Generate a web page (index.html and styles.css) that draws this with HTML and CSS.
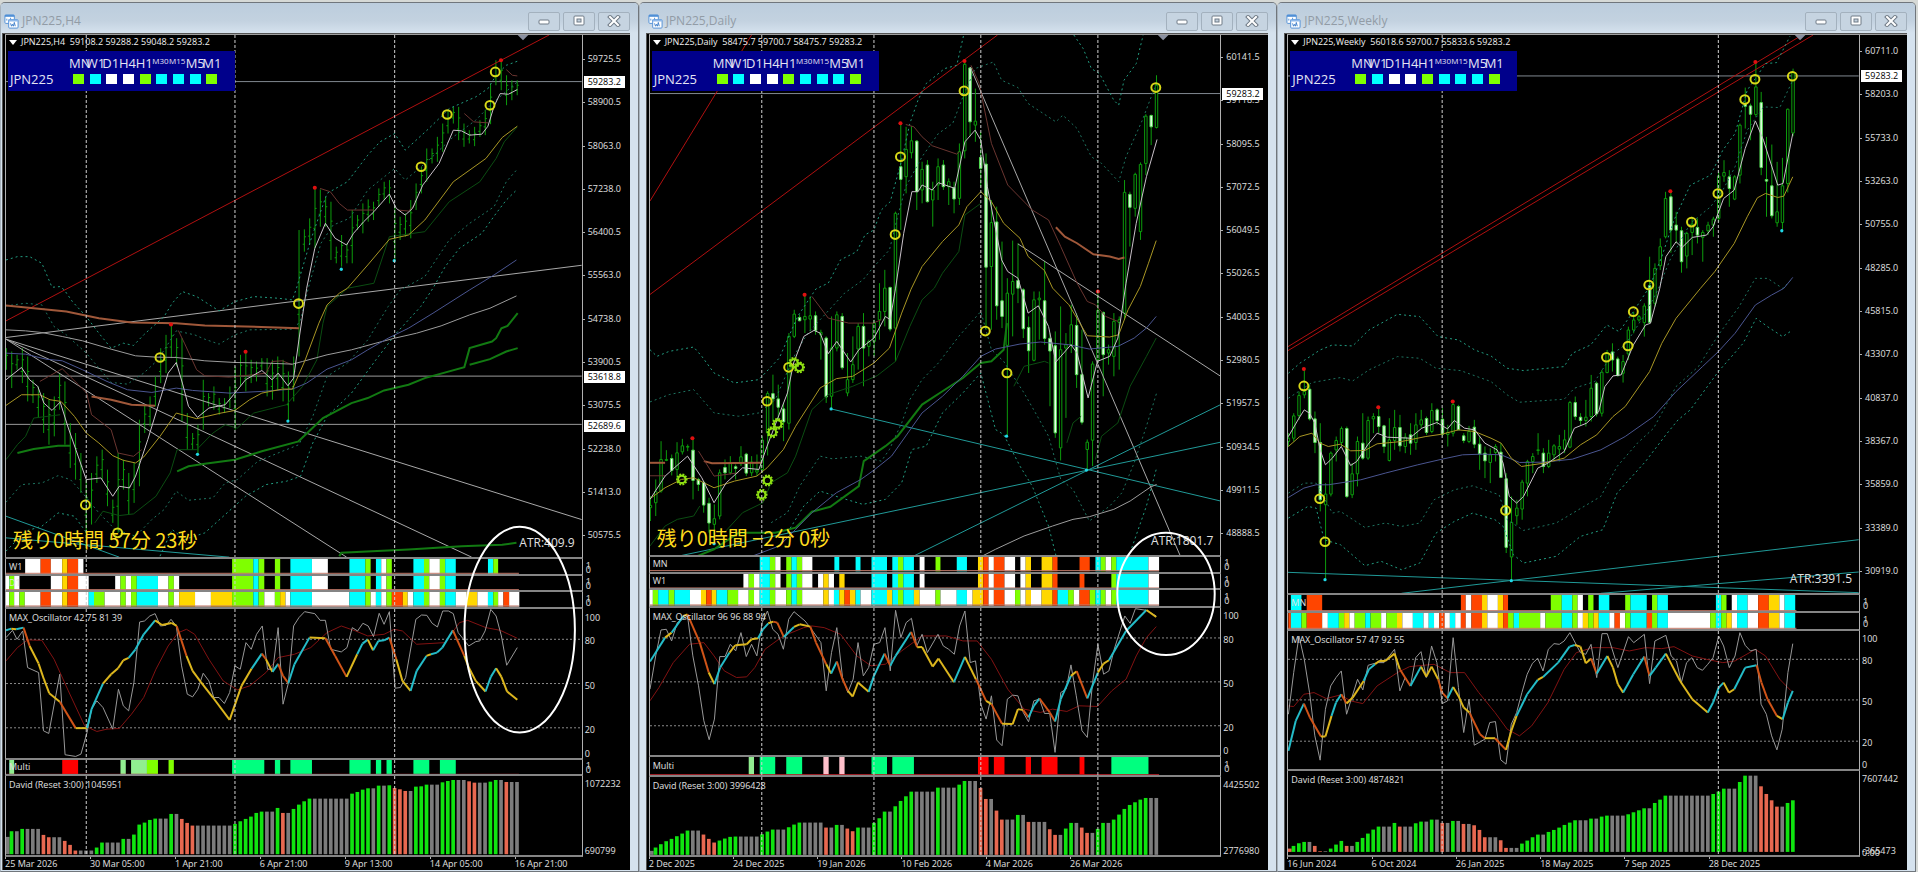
FILE: index.html
```html
<!DOCTYPE html>
<html lang="ja">
<head>
    <meta charset="UTF-8">
    <meta name="viewport" content="width=device-width, initial-scale=1.0">
    <title>JPN225</title>
    <link rel="stylesheet" href="styles.css">
</head>
<body>
    <!-- shared title bar icon -->
    <svg class="defs" aria-hidden="true">
        <symbol id="chart-icon" viewBox="0 0 16 16">
            <rect x="1" y="1" width="10" height="9" rx="1" fill="#fff" stroke="#4f8fd6"/>
            <rect x="1" y="1" width="10" height="2" fill="#4f8fd6"/>
            <path d="M3 7v-2M5 6v2M7 4v3" stroke="#4f8fd6" fill="none"/>
            <rect x="5" y="6" width="10" height="9" rx="1" fill="#fff" stroke="#4f8fd6"/>
            <rect x="5" y="6" width="10" height="2" fill="#8db8ea"/>
            <path d="M7 10l1 3 1-2 1 2 1-4 1 4" stroke="#3b7cc9" fill="none"/>
        </symbol>
        <symbol id="icon-min" viewBox="0 0 14 12">
            <rect x="2" y="5" width="10" height="4" rx="1" fill="#fff" stroke="#6f7a86"/>
        </symbol>
        <symbol id="icon-max" viewBox="0 0 14 12">
            <rect x="2" y="1" width="10" height="9" rx="1" fill="#fff" stroke="#6f7a86"/>
            <rect x="5" y="4" width="4" height="3" fill="#c3d1de" stroke="#6f7a86"/>
        </symbol>
        <symbol id="icon-close" viewBox="0 0 14 12">
            <path d="M3 2l8 8M11 2l-8 8" stroke="#6f7a86" stroke-width="4" stroke-linecap="square"/>
            <path d="M3 2l8 8M11 2l-8 8" stroke="#fff" stroke-width="2" stroke-linecap="square"/>
        </symbol>
    </svg>

    <main class="desktop">
        <section class="window window-first" data-chart="h4">
            <header class="title-bar">
                <svg class="title-icon"><use href="#chart-icon"/></svg>
                <h2>JPN225,H4</h2>
                <button aria-label="Minimize"><svg><use href="#icon-min"/></svg></button>
                <button aria-label="Maximize"><svg><use href="#icon-max"/></svg></button>
                <button aria-label="Close"><svg><use href="#icon-close"/></svg></button>
            </header>
            <div class="client">
                <div class="stack">
                    <div class="pane" data-pane="main">
                        <div class="plot">
                            <p class="quote">JPN225,H4&nbsp; 59108.2 59288.2 59048.2 59283.2</p>
                            <div class="panel">
                                <div class="frames"><span>MN</span><span>W1</span><span>D1</span><span>H4</span><span>H1</span><span class="tiny">M30</span><span class="tiny">M15</span><span>M5</span><span>M1</span></div>
                                <b>JPN225</b>
                                <div class="lamps"><i class="g"></i><i class="c"></i><i class="w"></i><i class="w"></i><i class="g"></i><i class="c"></i><i class="c"></i><i class="c"></i><i class="g"></i></div>
                            </div>
                            <p class="timer">残り0時間 57分 23秒</p>
                            <p class="atr">ATR:409.9</p>
                        </div>
                        <div class="axis prices prices-h4">
                            <span>59725.5</span><span>58900.5</span><span>58063.0</span><span>57238.0</span><span>56400.5</span><span>55563.0</span><span>54738.0</span><span>53900.5</span><span>53075.5</span><span>52238.0</span><span>51413.0</span><span>50575.5</span>
                            <em data-y="244">59283.2</em><em data-y="1132">53618.8</em><em data-y="1279">52689.6</em>
                        </div>
                    </div>
                    <div class="pane" data-pane="s1"><div class="plot"><p class="label">W1</p></div><div class="axis bits"><span>1</span><span>0</span></div></div>
                    <div class="pane" data-pane="s2"><div class="plot"><p class="label">D1</p></div><div class="axis bits"><span>1</span><span>0</span></div></div>
                    <div class="pane" data-pane="s3"><div class="plot"></div><div class="axis bits"><span>1</span><span>0</span></div></div>
                    <div class="pane" data-pane="osc">
                        <div class="plot"><p class="label">MAX_Oscillator 42 75 81 39</p></div>
                        <div class="axis levels"><span>100</span><span>80</span><span>50</span><span>20</span><span>0</span></div>
                    </div>
                    <div class="pane" data-pane="multi"><div class="plot"><p class="label">Multi</p></div><div class="axis bits"><span>1</span><span>0</span></div></div>
                    <div class="pane" data-pane="david">
                        <div class="plot"><p class="label">David (Reset 3:00) 1045951</p></div>
                        <div class="axis range"><span>1072232</span><span>690799</span></div>
                    </div>
                </div>
                <footer class="times"><span>25 Mar 2026</span><span>30 Mar 05:00</span><span>1 Apr 21:00</span><span>6 Apr 21:00</span><span>9 Apr 13:00</span><span>14 Apr 05:00</span><span>16 Apr 21:00</span></footer>
            </div>
        </section>

        <section class="window" data-chart="daily">
            <header class="title-bar">
                <svg class="title-icon"><use href="#chart-icon"/></svg>
                <h2>JPN225,Daily</h2>
                <button aria-label="Minimize"><svg><use href="#icon-min"/></svg></button>
                <button aria-label="Maximize"><svg><use href="#icon-max"/></svg></button>
                <button aria-label="Close"><svg><use href="#icon-close"/></svg></button>
            </header>
            <div class="client">
                <div class="stack">
                    <div class="pane" data-pane="main">
                        <div class="plot">
                            <p class="quote">JPN225,Daily&nbsp; 58475.7 59700.7 58475.7 59283.2</p>
                            <div class="panel">
                                <div class="frames"><span>MN</span><span>W1</span><span>D1</span><span>H4</span><span>H1</span><span class="tiny">M30</span><span class="tiny">M15</span><span>M5</span><span>M1</span></div>
                                <b>JPN225</b>
                                <div class="lamps"><i class="g"></i><i class="c"></i><i class="w"></i><i class="w"></i><i class="g"></i><i class="c"></i><i class="c"></i><i class="c"></i><i class="g"></i></div>
                            </div>
                            <p class="timer">残り0時間 −2分 0秒</p>
                            <p class="atr">ATR:1801.7</p>
                        </div>
                        <div class="axis prices prices-daily">
                            <span>60141.5</span><span>59118.5</span><span>58095.5</span><span>57072.5</span><span>56049.5</span><span>55026.5</span><span>54003.5</span><span>52980.5</span><span>51957.5</span><span>50934.5</span><span>49911.5</span><span>48888.5</span>
                            <em data-y="281">59283.2</em>
                        </div>
                    </div>
                    <div class="pane" data-pane="s1"><div class="plot"><p class="label">MN</p></div><div class="axis bits"><span>1</span><span>0</span></div></div>
                    <div class="pane" data-pane="s2"><div class="plot"><p class="label">W1</p></div><div class="axis bits"><span>1</span><span>0</span></div></div>
                    <div class="pane" data-pane="s3"><div class="plot"></div><div class="axis bits"><span>1</span><span>0</span></div></div>
                    <div class="pane" data-pane="osc">
                        <div class="plot"><p class="label">MAX_Oscillator 96 96 88 94</p></div>
                        <div class="axis levels"><span>100</span><span>80</span><span>50</span><span>20</span><span>0</span></div>
                    </div>
                    <div class="pane" data-pane="multi"><div class="plot"><p class="label">Multi</p></div><div class="axis bits"><span>1</span><span>0</span></div></div>
                    <div class="pane" data-pane="david">
                        <div class="plot"><p class="label">David (Reset 3:00) 3996428</p></div>
                        <div class="axis range"><span>4425502</span><span>2776980</span></div>
                    </div>
                </div>
                <footer class="times"><span>2 Dec 2025</span><span>24 Dec 2025</span><span>19 Jan 2026</span><span>10 Feb 2026</span><span>4 Mar 2026</span><span>26 Mar 2026</span></footer>
            </div>
        </section>

        <section class="window" data-chart="weekly">
            <header class="title-bar">
                <svg class="title-icon"><use href="#chart-icon"/></svg>
                <h2>JPN225,Weekly</h2>
                <button aria-label="Minimize"><svg><use href="#icon-min"/></svg></button>
                <button aria-label="Maximize"><svg><use href="#icon-max"/></svg></button>
                <button aria-label="Close"><svg><use href="#icon-close"/></svg></button>
            </header>
            <div class="client">
                <div class="stack">
                    <div class="pane" data-pane="main">
                        <div class="plot">
                            <p class="quote">JPN225,Weekly&nbsp; 56018.6 59700.7 55833.6 59283.2</p>
                            <div class="panel">
                                <div class="frames"><span>MN</span><span>W1</span><span>D1</span><span>H4</span><span>H1</span><span class="tiny">M30</span><span class="tiny">M15</span><span>M5</span><span>M1</span></div>
                                <b>JPN225</b>
                                <div class="lamps"><i class="g"></i><i class="c"></i><i class="w"></i><i class="w"></i><i class="g"></i><i class="c"></i><i class="c"></i><i class="c"></i><i class="g"></i></div>
                            </div>
                            <p class="atr">ATR:3391.5</p>
                        </div>
                        <div class="axis prices prices-weekly">
                            <span>60711.0</span><span>58203.0</span><span>55733.0</span><span>53263.0</span><span>50755.0</span><span>48285.0</span><span>45815.0</span><span>43307.0</span><span>40837.0</span><span>38367.0</span><span>35859.0</span><span>33389.0</span><span>30919.0</span>
                            <em data-y="228">59283.2</em>
                        </div>
                    </div>
                    <div class="pane" data-pane="s1"><div class="plot"><p class="label">MN</p></div><div class="axis bits"><span>1</span><span>0</span></div></div>
                    <div class="pane" data-pane="s2"><div class="plot"></div><div class="axis bits"><span>1</span><span>0</span></div></div>
                    <div class="pane" data-pane="osc">
                        <div class="plot"><p class="label">MAX_Oscillator 57 47 92 55</p></div>
                        <div class="axis levels"><span>100</span><span>80</span><span>50</span><span>20</span><span>0</span></div>
                    </div>
                    <div class="pane" data-pane="david">
                        <div class="plot"><p class="label">David (Reset 3:00) 4874821</p></div>
                        <div class="axis range"><span>7607442</span><span>-365473<small>0.00</small></span></div>
                    </div>
                </div>
                <footer class="times"><span>16 Jun 2024</span><span>6 Oct 2024</span><span>26 Jan 2025</span><span>18 May 2025</span><span>7 Sep 2025</span><span>28 Dec 2025</span></footer>
            </div>
        </section>
    </main>

    <script src="charts.js"></script>
</body>
</html>
```
FILE: styles.css
```css
* {
    box-sizing: border-box;
}
body {
    margin: 0;
    background: #d6d9d6;
    font-family: "Open Sans", "Noto Sans", sans-serif;
    font-size: 9px;
    line-height: 12px;
    color: #e0e0e0;
}
p, h2 {
    margin: 0;
    font-weight: normal;
}
.defs {
    display: none;
}
.desktop {
    display: grid;
    grid-template-columns: repeat(3, minmax(0, 1fr));
    grid-template-rows: 100%;
    height: 100vh;
    padding: 2px 2px 0 0;
}

/* Windows */
.window {
    min-width: 0;
    display: flex;
    flex-direction: column;
    padding: 0 8px 1px 6px;
    background: #d5e2ee;
    border: 1px solid #70767c;
    border-left-color: #a9b4be;
    border-radius: 5px 5px 0 0;
}
.window-first {
    padding-left: 1px;
}
.title-bar {
    display: flex;
    align-items: center;
    gap: 3px;
    height: 30px;
    margin: 0 -8px 0 -6px;
    padding: 6px 8px 0 8px;
    background: linear-gradient(#bccddd, #c3d2e0 60%, #d5e2ee);
    border-radius: 4px 4px 0 0;
}
.window-first .title-bar {
    margin-left: -1px;
    padding-left: 3px;
}
.title-icon {
    width: 15px;
    height: 15px;
}
.title-bar h2 {
    flex: 1;
    font-size: 12px;
    color: #929ca6;
}
.title-bar button {
    width: 32px;
    height: 19px;
    padding: 0;
    display: flex;
    align-items: center;
    justify-content: center;
    background: #c6d4e1;
    border: 1px solid #a3b1be;
    border-radius: 2px;
}
.title-bar button svg {
    width: 14px;
    height: 12px;
}
.client {
    flex: 1;
    min-height: 0;
    display: flex;
    flex-direction: column;
    padding: 0 0 0 2px;
    background: #000;
    border-left: 1px solid #555;
    border-top: 1px solid #555;
}

/* Chart panes */
.stack {
    position: relative;
    flex: 1;
    min-height: 0;
    display: flex;
    flex-direction: column;
    border-top: 1px solid #a0a0a0;
}
.pane {
    flex: 1 1 0;
    min-height: 0;
    display: flex;
}
.plot {
    position: relative;
    flex: 1;
    min-width: 0;
    border: 1px solid #b0b0b0;
    border-width: 0 1px 2px 1px;
    border-bottom-color: #858585;
}
.plot svg {
    position: absolute;
    inset: 0;
    width: 100%;
    height: 100%;
}
.plot p, .panel {
    position: absolute;
    z-index: 1;
    white-space: nowrap;
}
.quote {
    left: 15px;
    top: 1px;
    color: #f0f0f0;
}
.quote::before {
    content: "";
    position: absolute;
    left: -12px;
    top: 4px;
    border: 4px solid transparent;
    border-top: 5px solid #fff;
    border-bottom: 0;
}
.label {
    left: 3px;
    top: 3px;
}
[data-pane^="s"] .label, [data-pane="multi"] .label {
    top: 50%;
    margin-top: -6px;
}
.timer {
    left: 7px;
    bottom: 5px;
    font: 20px/24px "Noto Sans CJK JP", sans-serif;
    color: #ffdc1e;
}
.atr {
    right: 7px;
    bottom: 6px;
    font-size: 12px;
    line-height: 16px;
}
.panel {
    left: 2px;
    top: 16px;
    width: 227px;
    height: 40px;
    padding: 4px 14px 0 2px;
    display: grid;
    grid-template-columns: 61px 1fr;
    grid-template-rows: 16px 16px;
    align-items: center;
    background: #00008b;
    font-size: 13px;
    color: #e4e4f4;
}
.frames {
    grid-column: 2;
}
.frames, .lamps {
    display: grid;
    grid-template-columns: repeat(9, 1fr);
}
.frames span {
    width: 0;
    margin-left: -2px;
}
.frames .tiny {
    font-size: 8px;
    line-height: 8px;
}
.panel b {
    font-weight: normal;
}
.lamps i {
    width: 11px;
    height: 10px;
    margin-left: 2px;
}
.lamps .g { background: #7fff00; }
.lamps .c { background: #00ffff; }
.lamps .w { background: #ffffff; }

/* Scales */
.axis {
    position: relative;
    width: 47px;
    padding-left: 2px;
    display: flex;
    flex-direction: column;
    justify-content: space-between;
}
.prices {
    padding-left: 5px;
}
.prices span::before {
    content: "";
    position: absolute;
    left: 0;
    width: 2px;
    margin-top: 6px;
    border-top: 1px solid #b0b0b0;
}
.prices-h4 { padding-top: 18px; padding-bottom: 18px; }
.prices-daily { padding-top: 16px; padding-bottom: 18px; }
.prices-weekly { padding-top: 10px; padding-bottom: 18px; }
.axis em {
    position: absolute;
    left: 1px;
    width: 41px;
    margin-top: -6px;
    padding-left: 4px;
    background: #fff;
    color: #000;
    font-style: normal;
}
.bits {
    justify-content: center;
    padding-left: 3px;
    line-height: 4px;
}
.levels {
    display: grid;
    grid-template-rows: 40fr 102fr 164fr 104fr 36fr;
    align-items: center;
    padding-top: 2px;
}
.range {
    padding-top: 2px;
}
.range small {
    position: absolute;
    left: 2px;
    bottom: -2px;
    font-size: 9px;
}
.times {
    display: flex;
    height: 13px;
}
.times span {
    flex: none;
    width: 13.6%;
    line-height: 10px;
    white-space: nowrap;
}
.times span::before {
    content: "";
    display: block;
    height: 2px;
    border-left: 1px solid #b0b0b0;
}

/* Drawing */
.shape { fill: none; vector-effect: non-scaling-stroke; stroke-width: 1; }
.vline { stroke: #d0d0d0; stroke-dasharray: 3 2; }
.hline { stroke: #9a9a9a; }
.price { stroke: #808890; }
.level { stroke: #8a8a8a; stroke-dasharray: 2 2; }
.trend-red { stroke: #b01010; }
.trend-white { stroke: #a8a8a8; }
.trend-cyan { stroke: #209a98; }
.ma-white { stroke: #c8c0c8; }
.ma-long { stroke: #9c9c9c; }
.ma-blue { stroke: #4a5590; }
.ma-yellow { stroke: #a89624; }
.band { stroke: #229c80; stroke-dasharray: 2 3; }
.band-in { stroke: #1e7460; stroke-dasharray: 2 3; }
.orange { stroke: #a0583a; stroke-width: 2; }
.brown { stroke: #6a3530; }
.green { stroke: #127a12; stroke-width: 2; }
.dark { stroke: #0b4d12; }
.wick { stroke: #0c9c0c; }
.up { stroke: #0c9c0c; fill: #000; vector-effect: non-scaling-stroke; }
.down { stroke: #50d850; fill: #eaffea; vector-effect: non-scaling-stroke; }
.ring { stroke: #d8d818; stroke-width: 2; }
.sun { stroke: #8fe012; stroke-width: 2; }
.dot-red { fill: #e01010; }
.dot-cyan { fill: #20d8e8; }
.marker { fill: #8a90a0; }
.osc-grey { stroke: #989898; }
.osc-red { stroke: #821212; }
.osc { stroke-width: 2; }
.osc-c { stroke: #24bcc8; }
.osc-y { stroke: #dcb61e; }
.osc-o { stroke: #d05418; }
.base { stroke: #c07868; }
.base-red { stroke: #b02028; }
.fill-w { fill: #ffffff; }
.fill-r { fill: #ff4500; }
.fill-y { fill: #ffd700; }
.fill-g { fill: #7fff00; }
.fill-c { fill: #00ffff; }
.fill-s { fill: #00ff7f; }
.fill-l { fill: #90ee90; }
.fill-R { fill: #ff0000; }
.fill-p { fill: #ffc0cb; }
.bar-g { fill: #10e410; }
.bar-k { fill: #7c7c7c; }
.bar-r { fill: #e86850; }
.stack > .overlay {
    position: absolute;
    z-index: 2;
    left: 0;
    top: 0;
    width: calc(100% - 47px);
    height: 100%;
    pointer-events: none;
}
.circle { stroke: #fff; stroke-width: 2; }
```
FILE: charts.js
```js
// Every chart uses one coordinate space; a pane shows the slice between its top and the next pane's top.
const BAR = 13.06;

const charts = {
    h4: {
        left: 12, width: 1413, first: 13, bottom: 2574,
        panes: { main: 104, s1: 1679, s2: 1730, s3: 1779, osc: 1829, multi: 2281, david: 2332 },
        vlines: [209, 574, 966],
        price: 244,
        hlines: [1129, 1274],
        levels: [1920, 2053, 2186],
        circle: [1271, 1891, 135, 309],
        marker: 1281,
        // high low for each H4 bar
        sticks: "1045 1110 1055 1165 1065 1110 1045 1150 1070 1205 1140 1210 1160 1255 1180 1300 1200 1335 1190 1310 1120 1230 1145 1335 1270 1405 1300 1440 1360 1480 1440 1600 1420 1575 1370 1450 1350 1440 1410 1520 1500 1570 1360 1600 1380 1470 1420 1545 1390 1510 1260 1460 1215 1300 1190 1280 1130 1220 1045 1150 1005 1120 975 1075 1015 1100 1015 1265 1240 1350 1300 1350 1275 1365 1140 1290 1180 1220 1160 1230 1195 1245 1195 1240 1160 1225 1100 1290 1065 1160 1060 1175 1080 1150 1085 1145 1075 1110 1075 1190 1080 1200 1070 1170 1080 1205 1115 1265 1070 1205 690 1070 688 755 655 735 565 745 568 680 590 680 605 780 740 790 705 800 730 790 630 790 645 690 610 700 598 665 605 660 565 620 545 600 540 610 615 780 650 720 640 710 600 715 550 630 500 580 445 545 445 490 410 485 370 455 330 400 320 370 320 420 370 440 390 430 380 438 360 410 330 405 250 372 180 255 180 270 225 315 240 300 240 285",
        lines: [
            ["trend-red", "12,963 1345,104"],
            ["trend-white", "12,1013 1425,796"],
            ["trend-white", "12,1018 1425,1560"],
            ["trend-white", "12,1018 1155,1673"],
            ["trend-white", "12,1018 848,1673"],
            ["trend-cyan", "12,1550 290,1673"],
            ["trend-cyan", "12,1615 560,1673"],
            ["band", "12,780 40,770 70,770 100,790 125,862 145,860 155,870 175,905 209,950 240,1000 270,1045 300,1030 325,1037 350,1005 400,950 420,910 445,875 480,890 535,933 574,905 620,890 680,895 715,900 725,865 760,720 800,580 850,545 900,465 930,425 966,400 992,450 1050,385 1100,325 1165,290 1195,265 1215,225 1240,195 1267,183"],
            ["band-in", "12,918 60,910 100,915 130,980 160,1005 209,1060 270,1148 310,1153 350,1120 385,1080 430,993 475,1005 500,1018 535,1033 574,1005 610,990 720,988 735,960 755,860 785,730 815,675 855,655 900,570 966,505 992,540 1050,480 1110,410 1165,360 1205,310 1267,245"],
            ["band-in", "12,1508 50,1455 100,1450 140,1428 170,1440 200,1480 240,1540 280,1590 330,1610 370,1560 400,1530 430,1475 460,1502 520,1495 550,1450 580,1440 630,1385 690,1355 731,1335 765,1250 800,1130 850,1090 900,1020 950,920 980,870 1040,830 1100,720 1150,670 1210,620 1240,545 1265,510"],
            ["band", "12,1655 60,1595 100,1580 140,1540 180,1550 210,1600"],
            ["band", "390,1670 420,1590 450,1620 500,1600 550,1545 600,1490 650,1455 700,1445 735,1430 765,1330 800,1250 860,1180 920,1080 970,1000 1030,920 1060,865 1090,800 1125,745 1180,700 1215,640 1240,600 1265,570"],
            ["brown", "95,1145 150,1107 190,1155 210,1180 222,1245 270,1290 287,1360 325,1370 345,1350"],
            ["brown", "435,992 450,1030 480,1110 500,1128 560,1132 620,1125 650,1120 665,1085 690,1083 715,1095"],
            ["brown", "783,565 808,575 830,610 850,630 915,630"],
            ["brown", "975,630 1000,633 1015,615"],
            ["brown", "1137,340 1160,365 1195,368"],
            ["brown", "1240,208 1255,225 1267,227"],
            ["dark", "12,1380 40,1335 60,1310 80,1255 145,1245"],
            ["dark", "230,1570 250,1535 290,1548 325,1543 380,1490 415,1420 432,1350 480,1350 520,1300 550,1275 580,1285 620,1240 700,1215 740,1160 775,1080 790,970 800,920 850,865 915,850 953,710 1040,695 1100,605 1175,545 1215,475 1235,425 1267,380"],
            ["orange", "12,917 80,925 160,935 240,955 320,968 430,970 500,977 600,980 731,985"],
            ["orange", "222,1190 270,1200 320,1215 378,1218"],
            ["green", "40,1360 80,1348 140,1338 170,1338"],
            ["green", "432,1415 460,1400 500,1392 574,1380 640,1355 730,1325 790,1255 860,1210 900,1195 940,1172 1000,1155 1040,1135 1137,1102 1150,1045 1205,1025 1215,1015 1228,985 1243,978 1268,940"],
            ["green", "1150,1095 1200,1078 1240,1055 1268,1045"],
            ["green", "830,1670 835,1660 1000,1650 1130,1640 1230,1636 1265,1630"],
            ["ma-long", "12,990 60,993 100,998 150,1010 200,1023 270,1048 330,1068 380,1072 430,1073 500,1083 574,1088 650,1090 715,1093 740,1085 800,1065 860,1050 920,1030 966,1015 1020,1000 1080,978 1150,945 1200,925 1265,888"],
            ["ma-blue", "12,1060 60,1063 110,1078 150,1083 200,1110 260,1145 310,1170 370,1178 430,1165 470,1172 560,1180 640,1175 715,1168 750,1150 800,1108 860,1080 900,1050 950,1015 1000,985 1060,940 1150,870 1210,825 1265,780"],
            ["ma-yellow", "12,1217 50,1185 95,1185 120,1200 147,1205 180,1250 209,1300 240,1330 274,1368 300,1382 330,1390 350,1372 390,1310 430,1240 480,1257 540,1240 574,1232 610,1200 640,1180 690,1168 715,1168 745,1085 780,970 800,915 830,880 850,865 900,795 953,718 1000,705 1040,660 1110,545 1190,475 1230,412 1267,378"],
            ["ma-white", "12,1140 50,1103 70,1140 90,1160 105,1210 125,1232 145,1207 165,1285 209,1440 245,1435 274,1490 290,1460 315,1465 330,1430 360,1320 385,1220 410,1120 430,1088 445,1150 460,1220 482,1253 510,1225 550,1215 574,1180 600,1140 640,1112 665,1140 680,1120 704,1158 718,1135 731,1020 750,865 770,745 796,670 820,715 848,735 865,700 890,665 915,635 953,582 970,625 992,645 1010,625 1035,555 1075,490 1110,390 1130,392 1150,405 1180,402 1195,378 1210,318 1225,280 1245,282 1267,268"]
        ],
        redDots: [[770, 563], [1227, 180], [417, 974], [600, 1056]],
        cyanDots: [[835, 808], [965, 782], [704, 1264], [482, 1364]],
        rings: [[1213, 215], [1200, 315], [1095, 343], [1031, 500], [730, 911], [390, 1073], [207, 1516], [286, 1600]],
        suns: [],
        strips: {
            s1: "59w 97r 122w 150y 163r 189w 202- 567g 619c 632g 646- 672g 685- 710c 763w 802- 855c 894g 907- 920c 933w 946g 959- 1012c 1038g 1051w 1077g 1090c 1116- 1195c 1208g 1220-",
            s2: "12w 20g 32w 45- 122w 150y 163r 189w 215- 280w 293g 306w 319g 333c 385w 411g 424w 437- 567g 619c 632g 646- 672g 685- 710c 763w 802- 855c 894g 907- 920c 933w 946g 959- 1012c 1038g 1051w 1077g 1090c 1116-",
            s3: "12w 20g 32w 45g 58w 97r 122w 150y 163r 189w 215c 228g 254w 293g 306w 319g 333c 385w 411g 424w 437y 476w 515y 567g 619c 632g 646w 672g 685y 698w 710c 763w 855c 894g 907w 920c 933w 946g 959r 986y 998w 1012c 1038g 1051w 1077g 1090c 1116w 1143y 1169w 1195c 1208g 1220w 1233r 1247w 1272-",
            multi: "20l 32- 150R 189- 293l 306- 319l 358g 385- 411g 424- 567s 646- 672s 685- 710s 763- 855s 907- 920s 933- 946s 959- 1012s 1051- 1077s 1116-"
        },
        osc: "c 12,1893 25,1888 y 37,1890 c 55,1885 o 70,1940 y 92,1993 105,2040 118,2082 144,2108 o 183,2187 y 211,2187 c 222,2130 250,2053 y 270,2025 287,2007 300,1983 313,1976 c 330,1950 350,1905 378,1863 y 395,1877 418,1871 431,1880 o 455,1970 y 470,2015 490,2048 520,2095 561,2162 590,2060 615,2008 c 640,1963 o 650,1980 y 666,2018 c 680,1994 o 692,2030 705,2052 c 720,1995 757,1915 y 796,1917 o 820,1970 848,2033 y 874,1965 c 887,1933 900,1921 y 913,1953 c 926,1925 940,1923 953,1915 o 970,1980 y 985,2045 1005,2075 c 1020,2015 1044,1970 y 1055,1965 c 1070,1960 1083,1945 1109,1893 o 1137,1970 y 1148,2005 1165,2045 1189,2077 c 1202,2033 1215,2007 y 1228,2033 1242,2077 1267,2102",
        oscGrey: "12,1915 28,1893 39,1920 53,1895 65,2005 92,2020 104,2195 117,2203 144,2025 157,2267 183,2272 196,2265 211,2200 222,2130 235,2105 250,2125 274,2190 288,2070 300,2120 313,2135 326,2050 340,1868 352,1865 365,1850 378,1843 391,1880 405,1878 417,1860 430,1880 443,2000 457,2085 470,2093 483,2070 496,2022 510,2045 522,2095 535,2095 548,2113 561,2080 574,2000 587,2010 601,1930 614,1950 627,1905 641,1880 654,2010 667,2010 680,1885 692,2115 705,2052 718,1880 731,1855 745,1837 770,1843 783,1863 796,1863 809,1950 835,1958 849,1945 862,1885 875,1895 888,1872 901,1880 914,1912 928,1842 940,1875 953,1837 967,2067 980,2065 993,2035 1018,1860 1032,1847 1045,1848 1058,1872 1071,1883 1084,1835 1098,1835 1110,1843 1122,1900 1148,1940 1165,1927 1175,1925 1188,1895 1202,1830 1215,1850 1228,1910 1241,1998 1267,1945",
        oscRed: "12,1985 40,1945 65,1922 100,1923 130,1980 165,2075 205,2180 235,2197 260,2190 290,2188 320,2145 350,2095 380,2010 410,1940 435,1900 455,1890 475,1905 510,1980 545,2045 580,2072 610,2060 650,2020 680,1975 720,1965 760,1945 800,1900 835,1880 870,1895 900,1910 940,1905 965,1890 985,1895 1020,1935 1090,1930 1125,1870 1145,1863 1190,1885 1225,1893 1267,1917",
        david: "k895 g878 k878 g871 k871x3 r889 r896 k896x2 r907 r919 r936 k936x3 g927 g912 k912x3 g901 k901 g888 g858 g852 g844 g840 k840x2 g826 k826 r841 r853 r861 k861x7 g856 g848 g841 g834 g823 g819 k819x2 g808 r823 k823 g811 g798 g788 g780 k780x7 g765 g760 g753 g749 k749 g741 k741 g740 r748 r752 r757 k757 g744 g743 g738 k738x2 g731 g727 g724 k724x2 r728 r732 k732x2 g729 g724 k724 r730 k730x2",
        davidBase: 2567
    },

    daily: {
        left: 23, width: 1399, first: 24, bottom: 2575,
        panes: { main: 104, s1: 1674, s2: 1723, s3: 1773, osc: 1826, multi: 2274, david: 2335 },
        vlines: [297, 572, 834, 1121],
        price: 280,
        hlines: [],
        levels: [1916, 2048, 2180],
        circle: [1286, 1784, 119, 184],
        marker: 1281,
        // high low body-top body-bottom direction
        candles: "1490 1565 1518 1525 u|1440 1550 1477 1510 u|1325 1480 1380 1475 u|1352 1385 1380 1383 u|1365 1428 1377 1413 d|1328 1440 1360 1410 u|1318 1365 1339 1357 u|1335 1355 1341 1343 u|1318 1500 1352 1443 d|1435 1475 1440 1455 d|1445 1540 1449 1517 d|1495 1600 1512 1571 d|1515 1625 1558 1575 u|1410 1560 1420 1550 u|1380 1440 1404 1420 d|1370 1425 1392 1420 u|1395 1440 1402 1407 d|1340 1400 1372 1393 u|1360 1430 1364 1421 d|1370 1430 1388 1420 u|1365 1430 1412 1418 u|1310 1420 1322 1410 u|1175 1368 1182 1300 u|1125 1265 1182 1198 d|1155 1265 1198 1223 d|1210 1325 1228 1267 d|1000 1290 1010 1271 u|930 1015 943 1010 u|945 965 953 963 d|885 1000 950 960 u|890 995 948 958 u|935 1005 948 992 d|990 1080 998 1005 u|1010 1210 1015 1192 d|950 1225 1045 1190 u|935 1055 945 1045 u|940 1110 950 1104 d|1060 1190 1140 1180 u|1010 1150 1095 1140 u|970 1110 980 1048 u|940 1160 980 1045 d|1020 1070 1025 1040 u|960 1070 970 1025 u|850 1020 935 960 u|810 980 865 935 u|860 995 863 988 d|635 1085 640 985 u|370 690 500 538 d|380 580 448 530 u|378 475 422 458 u|420 630 423 575 d|485 610 508 570 u|480 608 495 605 d|545 680 570 600 u|475 600 500 555 u|480 570 495 560 d|535 615 545 560 u|545 640 563 597 d|430 615 455 595 u|180 475 192 452 u|200 410 203 365 d|265 425 363 375 u|395 560 472 505 d|460 990 492 802 d|600 990 668 800 u|620 960 666 918 d|725 985 903 950 d|835 1310 880 1037 u|722 1010 845 883 u|730 910 842 865 d|865 1015 870 987 d|950 1120 983 1053 d|875 1085 900 1082 u|875 1020 895 900 u|783 1035 903 1016 d|1000 1220 1016 1054 d|995 1315 1038 1300 d|920 1383 1050 1345 u|1000 1255 1035 1045 u|915 1060 975 1035 u|940 1165 977 1125 d|990 1275 1125 1268 d|1320 1410 1328 1350 u|1085 1400 1093 1322 u|875 1090 932 1080 u|935 1190 938 1065 d|1035 1095 1050 1060 u|940 1130 965 1070 u|950 1110 960 968 u|540 960 577 940 u|575 740 583 622 d|518 650 523 625 u|487 720 493 695 u|342 525 348 490 u|343 435 346 380 d|225 385 255 382 u",
        lines: [
            ["trend-red", "23,603 272,104"],
            ["trend-red", "23,884 875,104"],
            ["trend-white", "808,200 1323,1670"],
            ["trend-white", "925,732 1422,1130"],
            ["trend-cyan", "467,1228 1422,1505"],
            ["trend-cyan", "95,1670 1422,1328"],
            ["trend-cyan", "670,1670 1422,1215"],
            ["band", "23,1050 40,1070 70,1055 130,1042 150,1070 180,1120 230,1150 290,1140 340,1075 385,950 430,867 460,850 490,780 530,755 550,705 572,690 590,630 612,605 640,480 660,370 680,300 700,250 745,205 775,195 792,104"],
            ["band", "1062,104 1085,145 1105,205 1125,220 1160,300 1172,315 1185,240 1215,190 1232,104"],
            ["band-in", "23,1207 70,1185 130,1170 180,1240 240,1250 290,1240 330,1200 380,1060 410,1000 440,960 470,920 500,880 545,840 572,800 610,750 630,650 650,560 690,470 730,400 765,370 790,290 820,205 865,185 885,240 925,262 950,310 1018,365 1035,345 1070,385 1105,470 1130,490 1172,545 1190,470 1230,360 1264,250"],
            ["band-in", "320,1570 360,1540 390,1460 440,1370 470,1378 540,1370 590,1385 610,1350 640,1270 660,1200 690,1140 730,1090 780,1010 834,935 860,1050 890,1085 940,1180 975,1255 1000,1310 1030,1440 1060,1470 1100,1565 1150,1520 1180,1480 1210,1390 1240,1280 1265,1180"],
            ["band", "360,1600 400,1520 440,1475 490,1495 545,1515 600,1500 640,1450 665,1350 700,1340 740,1240 790,1180 834,1120 870,1290 890,1305 930,1400 960,1460 1000,1580 1018,1668"],
            ["band", "1200,1660 1240,1520 1265,1405"],
            ["orange", "1018,682 1040,710 1070,730 1110,763 1150,770 1172,777 1186,773"],
            ["orange", "23,1390 60,1390"],
            ["orange", "155,1385 175,1391 297,1390"],
            ["brown", "650,373 670,380 690,410 715,437 775,462 781,455"],
            ["brown", "810,195 830,250 860,430 900,555 960,630 1000,660 1030,740 1070,850 1095,905 1115,915 1140,950 1170,965"],
            ["brown", "420,890 460,955 510,970 570,970 590,960"],
            ["brown", "23,1429 60,1429"],
            ["brown", "142,1355 180,1430 240,1420"],
            ["green", "140,1670 180,1650 240,1600 330,1600 380,1585 420,1537 465,1522 535,1460 547,1385 600,1340 630,1310 690,1215 740,1175 790,1135 834,1090 860,1085 890,1050 898,970"],
            ["dark", "23,1640 60,1580 90,1560 130,1550 145,1520"],
            ["dark", "205,1600 250,1540 300,1510 320,1450 360,1420 380,1370 420,1230 460,1185 520,1160 580,1128 625,1085 660,980 690,900 720,865 740,820 780,755 795,645 834,610"],
            ["dark", "915,1160 940,1100 990,1085 1000,1090"],
            ["dark", "1045,1330 1060,1270 1080,1250"],
            ["dark", "1115,1380 1130,1310 1170,1270 1200,1160 1240,1070 1264,1015"],
            ["ma-long", "838,1670 870,1650 940,1610 1010,1580 1060,1560 1100,1552 1160,1530 1200,1505 1250,1463 1265,1455"],
            ["ma-blue", "275,1670 340,1640 380,1590 420,1540 480,1480 540,1440 572,1412 615,1370 690,1240 740,1190 790,1130 834,1070 870,1048 930,1033 980,1027 1050,1035 1100,1048 1170,1040 1210,1015 1240,985 1264,950"],
            ["ma-yellow", "23,1498 60,1465 100,1440 130,1435 180,1465 230,1445 285,1430 310,1405 350,1350 380,1280 440,1165 480,1137 520,1130 572,1090 610,1045 640,940 663,868 690,800 740,725 780,675 800,620 834,575 860,605 890,670 930,715 950,770 990,812 1010,865 1050,915 1095,1008 1150,1012 1172,1005 1195,930 1225,860 1245,790 1264,722"],
            ["ma-white", "23,1500 60,1430 115,1370 150,1435 180,1510 210,1450 250,1405 290,1410 310,1340 335,1260 360,1180 375,1090 400,1010 425,992 440,1000 460,1062 481,1025 515,1087 535,1050 572,1015 600,950 612,960 625,865 645,700 665,575 680,575 690,555 715,570 730,548 770,565 795,425 820,390 834,420 850,560 885,780 900,815 925,835 950,940 975,918 1000,980 1018,1087 1055,1035 1070,1060 1097,1195 1120,1085 1150,1070 1170,1015 1190,850 1215,670 1240,530 1266,418"]
        ],
        redDots: [[637, 369], [794, 182], [402, 885], [127, 1316], [1121, 875]],
        cyanDots: [[467, 1228], [897, 1310], [1093, 1412], [180, 1633]],
        rings: [[1263, 262], [793, 272], [637, 470], [624, 704], [845, 994], [898, 1120], [363, 1103], [310, 1205]],
        suns: [[376, 1090], [389, 1103], [336, 1273], [323, 1298], [101, 1440], [311, 1443], [297, 1486]],
        strips: {
            s1: "292c 317g 330w 343- 357g 370c 383g 396w 421- 475c 487- 527c 539- 566c 604- 617c 631g 644c 670- 684w 696- 723g 735- 775c 800- 827y 840r 853w 866r 892w 918- 931w 944y 957- 983y 1010r 1022- 1076r 1101- 1115c 1128g 1140w 1154g 1166c 1245w 1271-",
            s2: "252w 265g 278w 292c 317g 330w 343- 357g 370c 383g 396w 421- 435w 448y 461w 474- 487y 500- 566c 604- 617c 631g 644c 670- 684w 696- 827y 840r 853w 866r 892w 918- 931w 944y 957- 983y 1010r 1022- 1076r 1088- 1154g 1166c 1245w 1271-",
            s3: "23w 30g 43c 69g 83c 121w 148y 161r 174y 186c 213g 239w 265g 278w 292c 317g 330w 357g 370c 383g 396w 448y 461w 474c 487y 500r 513y 527c 539w 566c 604y 617c 631g 644c 670y 684w 723g 735w 775c 800w 814y 840r 853w 866r 892w 918g 931w 944y 957w 983y 1010r 1022c 1048g 1062w 1076r 1101g 1115c 1128g 1140w 1154g 1166c 1245w 1271-",
            multi: "265l 278- 292s 330- 357s 396- 448p 461- 487p 500- 566s 604- 617s 670- 827R 853- 866R 892- 944R 957- 983R 1022- 1076R 1088- 1154s 1245-"
        },
        osc: "c 23,1987 60,1915 y 76,1900 c 105,1850 y 115,1845 o 145,1930 167,2020 y 181,2055 c 195,2005 218,1960 y 232,1938 260,1935 272,1920 288,1917 c 300,1890 313,1872 y 325,1867 o 335,1870 351,1913 c 376,1883 y 390,1875 416,1882 o 430,1930 455,1995 y 467,2023 c 481,1987 o 495,2040 508,2075 y 520,2092 533,2050 559,2078 c 572,2030 598,1963 o 612,2000 c 625,1970 663,1898 o 678,1944 y 690,1943 716,2002 730,1978 768,2049 c 795,1973 y 822,2040 o 847,2105 y 860,2115 o 886,2174 y 912,2175 925,2130 938,2133 o 951,2155 c 964,2120 978,2098 o 1003,2140 1016,2167 c 1030,2100 1055,2030 y 1069,2016 o 1095,2098 c 1121,2020 y 1135,1993 1148,1983 c 1190,1895 1240,1832 y 1264,1853",
        oscGrey: "23,2070 37,1970 50,1892 63,1890 76,1925 90,1870 115,1850 128,1970 142,2060 155,2165 168,2222 181,2160 194,1972 207,1972 220,1935 233,1955 246,1900 259,1972 272,1935 285,1970 298,1870 311,1835 324,1890 337,1905 350,1950 363,1860 376,1837 403,1865 416,1885 442,1930 455,2075 468,1960 481,1885 495,2035 508,2080 521,2040 533,1930 546,2030 559,2005 572,1935 586,1930 599,1885 612,2015 625,1833 638,1915 651,1870 664,1857 677,1940 690,1905 703,1960 729,1905 742,1940 755,1950 769,1965 782,1880 795,1835 808,1990 821,1985 834,2115 847,2160 860,2090 873,2223 886,2240 899,2100 912,2088 925,2090 938,2140 951,2168 964,2105 978,2100 990,2143 1003,2143 1016,2260 1030,2080 1043,2070 1055,1997 1068,2090 1082,2195 1095,2215 1108,2050 1121,1935 1135,2025 1148,2015 1161,1950 1187,1850 1200,1872 1213,1828 1240,1833 1264,1850",
        oscRed: "23,2105 45,2065 80,1990 120,1935 155,1930 180,1970 205,2015 235,2035 260,2033 280,2005 305,1950 350,1910 400,1885 420,1880 450,1885 490,1905 530,1970 565,2000 600,1995 640,1955 690,1910 750,1910 790,1925 825,1925 860,1980 900,2070 940,2130 980,2140 1010,2130 1045,2137 1075,2120 1120,2122 1155,2075 1190,2040 1215,1970 1240,1915 1264,1882",
        david: "k937 g927 g917 g908 g901 g893 g885 g876 k876x2 r888 r901 r912 g906 g900 g895 g894 k894x4 g887 g879 g873 k873x2 g866 g858 g852 k852x4 r867 k867 g859 k859 r870 r878 g867 k867x2 g853 g839 g819 k819 g803 g787 g773 g759 k759x4 g747 k747x3 g738 g727 k727x2 r748 r781 k781 r816 r843 k843x2 g829 k829 r850 k850x3 r872 r889 k889 g870 g853 k853 r867 r883 k883 g871 g853 k853 g843 g828 g811 g799 g791 g783 g778 k778x2",
        davidBase: 2569
    },

    weekly: {
        left: 21, width: 1403, first: 22, bottom: 2573,
        panes: { main: 104, s1: 1786, s2: 1841, osc: 1895, david: 2314 },
        vlines: [400, 1079],
        price: 227,
        hlines: [],
        levels: [1980, 2102, 2226],
        marker: 1280,
        candles: "1300 1340 1315 1325 u|1240 1325 1248 1315 u|1175 1260 1187 1247 u|1105 1195 1175 1185 u|1155 1262 1168 1257 d|1235 1360 1257 1328 d|1270 1535 1328 1500 d|1450 1740 1483 1515 u|1355 1490 1360 1483 u|1310 1385 1322 1350 u|1280 1340 1286 1328 u|1280 1495 1286 1490 d|1390 1495 1422 1485 u|1310 1460 1325 1422 u|1240 1380 1330 1375 d|1250 1380 1262 1375 u|1240 1300 1250 1257 u|1220 1300 1250 1280 d|1275 1360 1278 1340 d|1255 1385 1320 1382 u|1230 1350 1283 1322 u|1245 1355 1283 1338 d|1300 1360 1312 1340 u|1270 1365 1305 1330 d|1240 1350 1275 1328 u|1230 1285 1260 1275 u|1250 1305 1256 1298 d|1210 1300 1232 1295 u|1225 1275 1230 1262 d|1225 1310 1258 1303 d|1275 1340 1298 1304 u|1208 1310 1214 1300 u|1215 1290 1220 1290 d|1300 1330 1308 1322 d|1278 1330 1295 1325 u|1260 1345 1282 1333 d|1310 1410 1333 1362 d|1340 1435 1360 1383 d|1345 1450 1365 1388 u|1333 1385 1340 1358 u|1330 1435 1357 1433 d|1420 1660 1437 1643 d|1490 1745 1568 1672 u|1500 1575 1525 1548 u|1440 1560 1447 1528 u|1380 1490 1385 1450 u|1360 1420 1370 1385 u|1300 1365 1350 1352 u|1345 1420 1360 1400 d|1320 1405 1360 1400 u|1333 1385 1338 1365 u|1305 1385 1340 1348 u|1290 1360 1320 1348 u|1203 1345 1208 1342 u|1190 1260 1208 1250 d|1240 1275 1252 1262 d|1200 1280 1252 1262 u|1125 1265 1165 1250 u|1145 1250 1150 1242 d|1110 1250 1117 1240 u|1050 1120 1058 1118 u|1030 1115 1056 1080 d|1070 1130 1077 1127 d|1065 1148 1085 1120 u|980 1080 990 1062 u|935 1000 960 990 u|945 965 950 960 u|910 1010 918 968 u|770 970 857 967 d|790 920 805 910 u|715 810 740 797 u|575 715 595 710 u|572 758 590 690 d|635 730 675 690 d|680 818 692 785 d|695 805 700 768 u|650 765 672 697 u|655 730 682 705 d|690 785 697 712 u|665 705 675 692 u|650 710 657 675 u|515 665 528 655 u|480 545 517 528 u|510 620 530 565 d|525 600 530 597 u|370 550 375 525 u|262 385 310 318 d|310 420 317 342 d|185 350 260 343 u|275 525 307 502 d|410 650 538 543 d|433 655 557 647 d|485 680 635 668 u|473 690 557 667 u|325 577 327 550 u|205 408 215 398 u",
        lines: [
            ["trend-red", "21,1040 1285,104"],
            ["trend-red", "21,1052 1312,104"],
            ["trend-cyan", "21,1718 1424,1779"],
            ["trend-cyan", "300,1781 1424,1620"],
            ["trend-cyan", "790,1781 1424,1717"],
            ["band", "22,1120 50,1090 100,1050 130,1035 180,1038 220,990 290,943 345,950 390,1010 440,1020 480,1050 520,1068 560,1105 600,1112 700,1100 720,1060 765,1035 805,975 835,995 870,935 910,860 940,770 970,660 1010,555 1060,525 1090,450 1120,400 1150,270 1195,190 1222,187 1255,108"],
            ["band-in", "22,1195 80,1148 150,1133 180,1143 220,1110 290,1070 345,1075 385,1105 445,1112 520,1145 560,1185 590,1207 700,1198 725,1165 775,1145 820,1060 850,1035 900,940 930,870 960,780 1010,670 1060,620 1090,570 1120,500 1150,390 1190,320 1230,322 1262,240"],
            ["band-in", "22,1480 60,1450 90,1450 130,1540 150,1535 210,1583 260,1570 300,1580 345,1570 380,1500 430,1470 475,1458 540,1485 560,1560 600,1592 680,1570 790,1490 830,1400 880,1330 920,1285 975,1160 1030,1100 1079,1005 1130,920 1170,835 1200,835 1237,865 1262,835"],
            ["band", "22,1555 70,1520 90,1525 110,1620 150,1635 210,1698 250,1685 300,1710 345,1690 385,1600 430,1565 475,1540 530,1560 550,1580 575,1665 600,1690 680,1670 740,1610 795,1590 830,1480 900,1385 950,1305 980,1260 1010,1230 1079,1115 1140,1030 1172,955 1200,980 1237,1010 1258,993"],
            ["ma-blue", "22,1493 60,1465 90,1455 120,1455 200,1440 260,1420 340,1395 400,1378 450,1365 500,1363 545,1365 590,1388 650,1387 720,1378 790,1350 850,1310 920,1250 975,1175 1040,1100 1079,1055 1120,1000 1170,915 1210,885 1240,865 1262,832"],
            ["ma-yellow", "22,1340 50,1310 80,1300 100,1330 120,1340 150,1333 175,1353 210,1352 240,1332 300,1325 360,1310 400,1303 440,1290 480,1295 520,1315 545,1330 570,1375 595,1400 650,1390 700,1375 740,1335 780,1305 820,1250 850,1220 910,1115 940,1030 975,955 1035,865 1070,815 1118,730 1150,650 1175,593 1195,580 1225,592 1240,588 1262,530"],
            ["ma-white", "22,1310 48,1255 61,1230 74,1240 87,1270 100,1350 113,1395 130,1375 152,1340 175,1397 190,1385 217,1335 240,1300 265,1312 320,1315 350,1285 387,1268 413,1287 430,1262 455,1285 480,1290 505,1330 535,1350 550,1390 565,1490 583,1510 600,1490 635,1405 660,1390 700,1355 725,1285 755,1270 785,1235 800,1160 820,1128 840,1125 870,1035 900,975 912,970 935,865 950,770 975,725 990,742 1015,712 1050,705 1066,680 1092,595 1118,570 1145,445 1170,362 1190,420 1225,555 1238,550 1262,400"]
        ],
        redDots: [[60, 1107], [243, 1222], [426, 1205], [961, 573], [1170, 185]],
        cyanDots: [[1235, 692], [112, 1740], [570, 1743]],
        rings: [[1261, 228], [1169, 237], [1144, 298], [1078, 580], [1013, 666], [908, 855], [870, 935], [857, 1038], [804, 1072], [60, 1158], [99, 1497], [112, 1626], [556, 1532]],
        suns: [],
        strips: {
            s1: "28c 54- 67r 105- 446r 458w 472r 498y 511w 537y 550r 562- 667g 694c 720g 733w 746- 759g 772- 785c 811- 850g 863c 903- 916g 929c 955- 1073c 1086g 1099- 1112w 1125c 1151w 1177r 1203y 1229w 1242c 1268-",
            s2: "22r 28c 54g 67r 105w 119c 146g 159y 172w 185g 211c 224g 250w 263g 289y 302w 328c 354w 367c 380w 393r 406w 419c 432w 446r 458w 472r 498y 511w 537y 550r 562g 576c 589g 641w 654g 694c 720g 733w 746y 759g 772y 785c 811w 824r 837w 850g 863c 903r 916g 929c 955w 1059g 1073c 1086g 1099y 1112w 1125c 1151w 1177r 1203y 1229w 1242c 1268-"
        },
        osc: "c 22,2255 40,2165 60,2113 o 75,2155 102,2212 y 113,2212 128,2150 c 139,2110 152,2085 o 165,2113 y 180,2095 207,2045 c 220,2010 235,1995 y 245,1985 260,1985 283,1963 296,2010 o 322,2060 c 348,2002 y 361,2032 374,2002 390,2040 o 400,2080 413,2097 c 427,2063 y 440,2090 453,2125 467,2140 o 493,2205 505,2217 y 530,2217 o 557,2252 y 570,2195 583,2150 c 609,2085 635,2042 y 648,2033 c 685,1990 713,1942 726,1937 y 740,1942 753,1992 766,1978 o 780,2023 c 806,1970 y 820,2005 832,2055 845,2080 c 870,2025 897,1972 o 910,2030 c 925,2005 950,1963 y 985,2045 1015,2100 1053,2140 c 1066,2110 1080,2065 1092,2050 y 1105,2080 1118,2070 c 1145,2005 1173,1998 o 1185,2050 1200,2100 1223,2150 y 1237,2160 c 1250,2110 1262,2075",
        oscGrey: "22,2145 35,2020 48,1910 61,1980 74,2080 87,2210 100,2283 113,2130 126,2060 139,2035 152,2015 165,2145 192,2040 205,2072 218,1998 240,1990 257,1990 283,1950 296,2075 309,2035 322,2060 335,1975 348,1957 361,2035 374,1940 387,1990 400,2113 413,2105 427,1915 440,2065 453,2200 466,2100 479,2238 505,2220 517,2170 531,2167 544,2282 557,2295 570,2175 583,2140 596,2080 609,2025 622,1992 635,1977 648,2015 661,1950 675,1933 688,1935 700,1925 714,1900 740,1960 753,1965 766,1935 780,2035 793,1903 806,1903 832,2005 858,1912 871,1930 897,1905 910,2053 923,1925 950,1908 963,1970 976,1985 988,2050 1001,1990 1014,1975 1027,2005 1040,2013 1053,1995 1066,1975 1080,1910 1092,1940 1106,2005 1120,1970 1132,1900 1145,1938 1158,1955 1172,1950 1184,2115 1197,2145 1210,2210 1223,2252 1236,2190 1250,2020 1262,1933",
        oscRed: "22,2120 35,2122 60,2085 85,2080 115,2098 150,2087 175,2105 205,2113 240,2060 290,2020 320,2002 380,1995 420,2020 455,2020 490,2080 530,2140 560,2190 590,2210 620,2180 660,2110 700,2010 730,1960 770,1945 820,1945 860,1955 900,1945 940,1948 970,1942 1015,1970 1050,1980 1090,1990 1120,1985 1170,1950 1195,1970 1230,2040 1262,2080",
        david: "r927 g919 g911 g907 k907 r919 r935 k935 g927 g915 g904 r919 k919 g907 g895 g882 g870 g861 k861x2 g850 r861 k861x2 g851 g846 k846 g840 k840 r850 k850 g844 k844 r853 k853 r857 r871 r893 k893x2 r902 r925 k925x2 g912 g903 g893 g885 k885 g877 g871 g864 g856 g849 g842 k842x2 g837 k837 g831 g828 k828x3 g824 g818 g812 g806 k806 g790 g780 g768 k768x8 g763 g756 g747 k747x2 g727 g708 k708x2 r740 r763 r782 r801 k801 g790 g782",
        davidBase: 2557
    }
};

function el(svg, name, attrs) {
    const node = document.createElementNS("http://www.w3.org/2000/svg", name);
    for (let key in attrs) {
        node.setAttribute(key, attrs[key]);
    }
    svg.appendChild(node);
}

function line(svg, cls, points) {
    el(svg, "polyline", { class: "shape " + cls, points: points });
}

function makeSvg(parent, chart, top, bottom) {
    const svg = document.createElementNS("http://www.w3.org/2000/svg", "svg");
    svg.setAttribute("viewBox", `${chart.left} ${top} ${chart.width} ${bottom - top}`);
    svg.setAttribute("preserveAspectRatio", "none");
    parent.prepend(svg);
    return svg;
}

function sun(svg, x, y) {
    el(svg, "ellipse", { class: "shape sun", cx: x, cy: y, rx: 9, ry: 11 });
    for (let i = 0; i < 10; i++) {
        const a = i * Math.PI / 5;
        const dx = Math.cos(a);
        const dy = Math.sin(a);
        line(svg, "sun", `${x + dx * 10},${y + dy * 12} ${x + dx * 14},${y + dy * 18}`);
    }
}

function drawMain(svg, chart) {
    const right = chart.left + chart.width;
    line(svg, "price", `${chart.left},${chart.price} ${right},${chart.price}`);
    chart.hlines.forEach(y => line(svg, "hline", `${chart.left},${y} ${right},${y}`));

    if (chart.sticks) {
        const v = chart.sticks.split(" ").map(Number);
        for (let i = 0; i < v.length / 2; i++) {
            const x = chart.first + i * BAR;
            const h = v[i * 2];
            const l = v[i * 2 + 1];
            const third = (l - h) / 3;
            line(svg, "wick", `${x},${h} ${x},${l}`);
            line(svg, "wick", `${x - 4},${l - third} ${x},${l - third}`);
            line(svg, "wick", `${x},${h + third} ${x + 4},${h + third}`);
        }
    } else {
        chart.candles.split("|").forEach((row, i) => {
            const [h, l, top, bottom, dir] = row.split(" ");
            const x = chart.first + i * BAR;
            line(svg, "wick", `${x},${h} ${x},${l}`);
            el(svg, "rect", { class: dir === "u" ? "up" : "down", x: x - 3, y: top, width: 6, height: bottom - top });
        });
    }

    chart.lines.forEach(([cls, points]) => line(svg, cls, points));
    chart.redDots.forEach(([x, y]) => el(svg, "ellipse", { class: "dot-red", cx: x, cy: y, rx: 5, ry: 6 }));
    chart.cyanDots.forEach(([x, y]) => el(svg, "ellipse", { class: "dot-cyan", cx: x, cy: y, rx: 4, ry: 5 }));
    chart.rings.forEach(([x, y]) => el(svg, "ellipse", { class: "shape ring", cx: x, cy: y, rx: 11, ry: 13 }));
    chart.suns.forEach(([x, y]) => sun(svg, x, y));

    const m = chart.marker;
    el(svg, "polygon", { class: "marker", points: `${m - 13},104 ${m + 13},104 ${m},120` });
}

function drawStrip(svg, cells, chart, top, bottom, base) {
    const tokens = cells.split(" ");
    tokens.forEach((token, i) => {
        const color = token.slice(-1);
        if (color === "-") return;
        const x = parseInt(token);
        const end = parseInt(tokens[i + 1]);
        el(svg, "rect", { class: "fill-" + color, x: x, y: top, width: end - x, height: bottom - top });
    });
    line(svg, base, `${chart.left},${bottom - 2} 1271,${bottom - 2}`);
}

function drawOsc(svg, chart) {
    chart.levels.forEach(y => line(svg, "level", `${chart.left},${y} ${chart.left + chart.width},${y}`));
    line(svg, "osc-red", chart.oscRed);
    line(svg, "osc-grey", chart.oscGrey);

    // a colour letter starts a new piece at the last point of the one before
    let color = "";
    let last = "";
    chart.osc.split(" ").forEach(token => {
        if (token.length === 1) {
            color = token;
            return;
        }
        if (last) line(svg, "osc osc-" + color, last + " " + token);
        last = token;
    });
}

function drawDavid(svg, chart) {
    let i = 0;
    chart.david.split(" ").forEach(token => {
        const [value, repeat] = token.slice(1).split("x");
        const y = Number(value) + 1620;
        for (let n = 0; n < (repeat || 1); n++) {
            const x = Math.max(chart.first + i * BAR - 5, chart.left);
            el(svg, "rect", { class: "bar-" + token[0], x: x, y: y, width: 9, height: Math.max(chart.davidBase - y, 2) });
            i++;
        }
    });
}

document.querySelectorAll(".window").forEach(win => {
    const chart = charts[win.dataset.chart];
    const names = Object.keys(chart.panes);

    names.forEach((name, n) => {
        const pane = win.querySelector(`[data-pane="${name}"]`);
        const top = chart.panes[name];
        const next = n + 1 < names.length ? chart.panes[names[n + 1]] : chart.bottom;
        const bottom = next - 6;
        pane.style.flexGrow = next - top;

        const svg = makeSvg(pane.querySelector(".plot"), chart, top, bottom);
        if (name === "main") drawMain(svg, chart);
        else if (name === "osc") drawOsc(svg, chart);
        else if (name === "david") drawDavid(svg, chart);
        else drawStrip(svg, chart.strips[name], chart, top, bottom, name === "multi" ? "base-red" : "base");
        chart.vlines.forEach(x => line(svg, "vline", `${x},${top} ${x},${bottom}`));

        pane.querySelectorAll("em").forEach(tag => {
            tag.style.top = (tag.dataset.y - top) / (next - top) * 100 + "%";
        });
    });

    if (chart.circle) {
        const [cx, cy, rx, ry] = chart.circle;
        const svg = makeSvg(win.querySelector(".stack"), chart, 104, chart.bottom);
        svg.setAttribute("class", "overlay");
        el(svg, "ellipse", { class: "shape circle", cx: cx, cy: cy, rx: rx, ry: ry });
    }
});
```
